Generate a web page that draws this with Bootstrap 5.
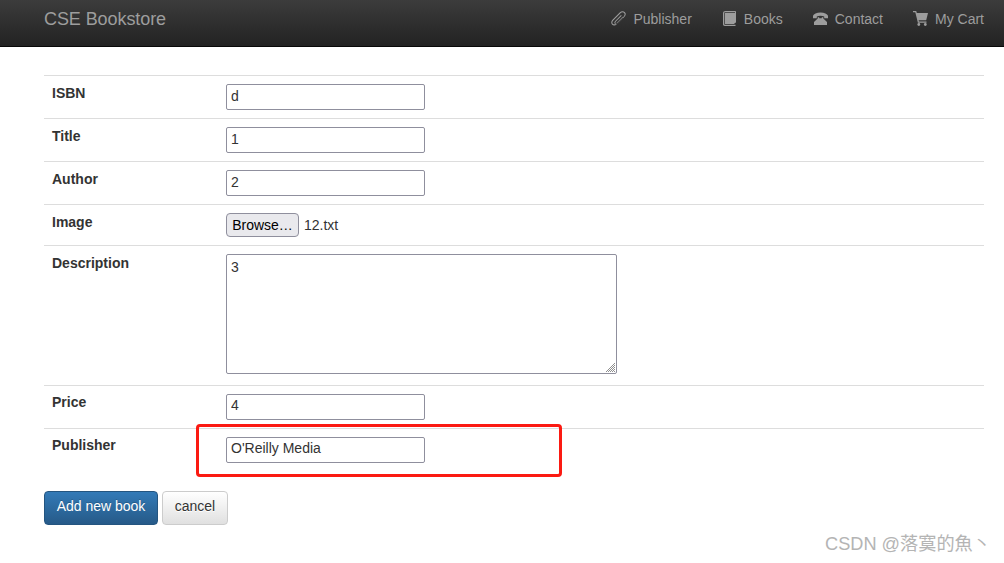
<!DOCTYPE html>
<html lang="en">
<head>
    <meta charset="UTF-8">
    <meta name="viewport" content="width=device-width, initial-scale=1.0">
    <title>CSE Bookstore</title>
    <link href="https://cdn.jsdelivr.net/npm/bootstrap@5.3.0/dist/css/bootstrap.min.css" rel="stylesheet">
    <style>
        html, body { height: 563px; overflow: hidden; }
        body { font-family: "Liberation Sans", Arial, sans-serif; font-size: 14px; line-height: 20px; color: #333; background: #fff; }
        .top-bar { height: 47px; padding: 0 5px 0 44px; align-items: flex-start; background: linear-gradient(to bottom, #3c3c3c 0, #222 100%); border-bottom: 1px solid #080808; flex-wrap: nowrap; }
        .top-bar .navbar-brand { font-size: 18px; line-height: 20px; color: #9d9d9d; padding: 9px 0; margin: 0; letter-spacing: -.08px; }
        .top-bar .nav-link { display: flex; align-items: center; gap: 7px; color: #9d9d9d; padding: 9px 15px; line-height: 20px; font-size: 14px; }
        .top-bar svg { width: 15px; height: 15px; fill: #9d9d9d; flex: none; margin-top: -1px; }
        .page-body { padding: 28px 20px 0 44px; }
        .book-form { margin-bottom: 20px; table-layout: fixed; width: 940px; }
        .book-form th, .book-form td { padding: 8px; border-top: 1px solid #ddd; border-bottom: 0; box-shadow: none; vertical-align: top; background: transparent; color: #333; }
        .book-form th { width: 174px; font-weight: 700; line-height: 18px; }
        .book-form .tight-row th { line-height: 16px; }
        .plain-input { display: block; width: 199px; height: 26px; padding: 0 4px 2px; font-size: 14px; color: #333; border: 1px solid #8f8f9d; border-radius: 2px; background: #fff; font-family: inherit; }
        .tight-row .plain-input { padding-bottom: 4px; }
        .plain-area { display: block; width: 391px; height: 120px; padding: 2px 4px; font-size: 14px; line-height: 20px; color: #333; border: 1px solid #8f8f9d; border-radius: 2px; font-family: inherit; resize: none; }
        .area-wrap { position: relative; width: 391px; margin-bottom: 3px; }
        .area-grip { position: absolute; right: 1px; bottom: 1px; width: 11px; height: 11px; stroke: #8f8f8f; stroke-width: 1; }
        .browse-btn { height: 24px; width: 73px; padding: 0; font-size: 14px; color: #000; background: #e9e9ed; border: 1px solid #8f8f9d; border-radius: 4px; font-family: inherit; }
        .file-name { margin-left: 5px; }
        .mark-cell { position: relative; }
        .red-box { position: absolute; left: -22px; top: -5px; width: 366px; height: 53px; border: 3px solid #fb1a12; border-radius: 4px; pointer-events: none; }
        .btn-add, .btn-cancel { height: 34px; font-size: 14px; line-height: 20px; padding: 4px 0 8px; border-radius: 4px; }
        .btn-add { width: 114px; color: #fff; background: linear-gradient(to bottom, #337ab7 0, #265a88 100%); border: 1px solid #245580; text-shadow: 0 -1px 0 rgba(0,0,0,.2); }
        .btn-cancel { width: 66px; color: #333; background: linear-gradient(to bottom, #fff 0, #e0e0e0 100%); border: 1px solid #ccc; text-shadow: 0 1px 0 #fff; }
        .water-mark { position: absolute; right: 13px; top: 530px; font-family: "Liberation Sans", "Noto Sans CJK TC", sans-serif; font-size: 18.2px; line-height: 28px; color: #b4b4b4; white-space: nowrap; }
    </style>
</head>
<body>
    <nav class="navbar top-bar d-flex justify-content-between">
        <a class="navbar-brand" href="#">CSE Bookstore</a>
        <ul class="navbar-nav flex-row">
            <li class="nav-item"><a class="nav-link" href="#">
                <svg viewBox="0 0 15 15"><path fill-rule="evenodd" d="M13.900 1.200C12.500-.2 10.300-.1 8.700 1.500L1.500 8.700C.1 10.100-.2 12 1 13.500c1.300 1.500 3.300 1.300 4.800-.2L12.500 6.600l-.8-.8L5 12.500c-1 1-2.400 1.200-3.200.3C1 12 1.200 10.600 2.300 9.500L9.500 2.300c1.100-1.100 2.700-1.300 3.600-.4s.7 2.400-.4 3.500L6.200 11.900c-.5.500-1.200.7-1.600.3s-.2-1.100.3-1.600l5.800-5.800-.7-.7-5.800 5.800c-.9.900-1.100 2.100-.3 2.900s2 .6 2.900-.3l6.500-6.500c1.600-1.600 2-3.400.6-4.800z"/></svg>
                Publisher</a></li>
            <li class="nav-item"><a class="nav-link" href="#">
                <svg viewBox="0 0 15 15"><path d="M3.500 0h9.800c.4 0 .7.300.7.700v10.500l-1 1V1.200H3.400C2.900 1.200 2.500 1.400 2.300 1.600v11.600c0 .4.300.6.700.6h10.500V15H2.800C1.700 15 1 14.300 1 13.300V2.200C1 .9 2.100 0 3.500 0z"/><path d="M3 2h10v10l-1 1H3z"/></svg>
                Books</a></li>
            <li class="nav-item"><a class="nav-link" href="#">
                <svg viewBox="0 0 15 15"><path d="M7.500 1.500C3.500 1.500.8 3 0 4.800V7.300h3.800V5.400c1-.5 2.300-.7 3.700-.7s2.700.2 3.700.7v1.900H15V4.800C14.200 3 11.500 1.500 7.500 1.500z"/><path d="M4.700 6.200h1.500v1h2.600v-1h1.500v1.300L14 11v3H1v-3l3.700-3.500z"/></svg>
                Contact</a></li>
            <li class="nav-item"><a class="nav-link" href="#">
                <svg viewBox="0 0 15 15"><path d="M0 0h3.200l.6 2H15l-1.800 7.200H5.600l.3 1.300h7.600v1.200H4.900L2.300 1.200H0z"/><circle cx="5.800" cy="13.500" r="1.400"/><circle cx="12.300" cy="13.500" r="1.400"/></svg>
                My Cart</a></li>
        </ul>
    </nav>

    <div class="page-body">
        <form>
            <table class="table book-form">
                <tbody>
                    <tr><th>ISBN</th><td><input class="plain-input" type="text" value="d"></td></tr>
                    <tr><th>Title</th><td><input class="plain-input" type="text" value="1"></td></tr>
                    <tr><th>Author</th><td><input class="plain-input" type="text" value="2"></td></tr>
                    <tr><th>Image</th><td class="d-flex align-items-center"><button type="button" class="browse-btn">Browse…</button><span class="file-name">12.txt</span></td></tr>
                    <tr><th>Description</th><td>
                        <div class="area-wrap">
                            <textarea class="plain-area">3</textarea>
                            <svg class="area-grip" viewBox="0 0 11 11"><path d="M1 10 10 1M3 10l7-7M5 10l5-5M7 10l3-3M9 10l1-1"/></svg>
                        </div>
                    </td></tr>
                    <tr class="tight-row"><th>Price</th><td><input class="plain-input" type="text" value="4"></td></tr>
                    <tr class="tight-row"><th>Publisher</th><td class="mark-cell"><input class="plain-input" type="text" value="O'Reilly Media"><div class="red-box"></div></td></tr>
                </tbody>
            </table>
            <div class="d-flex gap-1">
                <button type="button" class="btn btn-add">Add new book</button>
                <button type="button" class="btn btn-cancel">cancel</button>
            </div>
        </form>
    </div>

    <div class="water-mark">CSDN @落寞的魚丶</div>
</body>
</html>
